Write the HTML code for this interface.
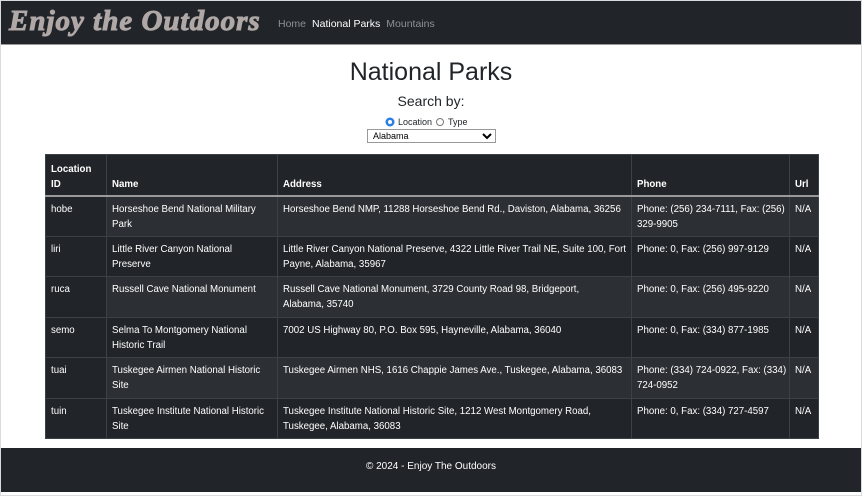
<!DOCTYPE html>
<html><head><style>
*{box-sizing:border-box;margin:0;padding:0}
body{width:862px;height:496px;background:#fff;font-family:"Liberation Sans",sans-serif;color:#212529;position:relative;overflow:hidden;border:1px solid #d8dbe0}
.nav{position:absolute;left:0;top:0;width:860px;height:44px;background:#212529;border-bottom:1px solid #999}
.logo{position:absolute;left:8px;top:4px;font-family:"Liberation Serif",serif;font-weight:bold;font-style:italic;font-size:29px;color:#b0a8a6;letter-spacing:1px;-webkit-text-stroke:1px #b0a8a6}
.links{position:absolute;left:277px;top:17px;font-size:10.5px;color:#8c9196}
.links span{margin-right:6px}
.links .a{color:#fff}
h1{position:absolute;left:0;width:860px;top:57px;text-align:center;font-weight:normal;font-size:25px}
.sb{position:absolute;left:0;width:860px;top:92px;text-align:center;font-size:14px}
.radio{position:absolute;left:385px;top:116px;font-size:9px;display:flex;align-items:center;gap:4px}
.r{width:8px;height:8px;border-radius:50%;border:1px solid #777;display:inline-block}
.r.on{border:2.5px solid #2b7ee8;background:#fff;box-shadow:0 0 0 0.5px #2b7ee8}
select{position:absolute;left:366px;top:128px;width:129px;height:14px;font-size:9px;font-family:"Liberation Sans",sans-serif;border:1px solid #999;background:#fff;padding-left:1px}
table{position:absolute;left:44px;top:153px;width:773px;table-layout:fixed;border-collapse:collapse;font-size:9.7px;color:#fff;background:#212529;border:1px solid #555}
td,th{border:1px solid #3c4146;padding:5px 5px 3px;vertical-align:top;line-height:15px;text-align:left;white-space:nowrap;overflow:hidden}
th{vertical-align:bottom;height:41px;border-bottom:2px solid #999}
tbody tr:nth-child(odd) td{background:#2c3034}
tbody tr td:first-child{background:#212529}
td{height:40.5px}
.foot{position:absolute;left:0;top:447px;width:860px;height:44px;background:#212529;color:#fff;font-size:10px;text-align:center;line-height:37px}
</style></head><body>
<div class="nav"><div class="logo">Enjoy the Outdoors</div>
<div class="links"><span>Home</span><span class="a">National Parks</span><span>Mountains</span></div></div>
<h1>National Parks</h1>
<div class="sb">Search by:</div>
<div class="radio"><span class="r on"></span>Location <span class="r"></span>Type</div>
<select><option>Alabama</option></select>
<table>
<colgroup><col style="width:61px"><col style="width:171px"><col style="width:354px"><col style="width:158px"><col style="width:29px"></colgroup>
<thead><tr><th>Location<br>ID</th><th>Name</th><th>Address</th><th>Phone</th><th>Url</th></tr></thead>
<tbody>
<tr><td>hobe</td><td>Horseshoe Bend National Military<br>Park</td><td>Horseshoe Bend NMP, 11288 Horseshoe Bend Rd., Daviston, Alabama, 36256</td><td>Phone: (256) 234-7111, Fax: (256)<br>329-9905</td><td>N/A</td></tr>
<tr><td>liri</td><td>Little River Canyon National<br>Preserve</td><td>Little River Canyon National Preserve, 4322 Little River Trail NE, Suite 100, Fort<br>Payne, Alabama, 35967</td><td>Phone: 0, Fax: (256) 997-9129</td><td>N/A</td></tr>
<tr><td>ruca</td><td>Russell Cave National Monument</td><td>Russell Cave National Monument, 3729 County Road 98, Bridgeport,<br>Alabama, 35740</td><td>Phone: 0, Fax: (256) 495-9220</td><td>N/A</td></tr>
<tr><td>semo</td><td>Selma To Montgomery National<br>Historic Trail</td><td>7002 US Highway 80, P.O. Box 595, Hayneville, Alabama, 36040</td><td>Phone: 0, Fax: (334) 877-1985</td><td>N/A</td></tr>
<tr><td>tuai</td><td>Tuskegee Airmen National Historic<br>Site</td><td>Tuskegee Airmen NHS, 1616 Chappie James Ave., Tuskegee, Alabama, 36083</td><td>Phone: (334) 724-0922, Fax: (334)<br>724-0952</td><td>N/A</td></tr>
<tr><td>tuin</td><td>Tuskegee Institute National Historic<br>Site</td><td>Tuskegee Institute National Historic Site, 1212 West Montgomery Road,<br>Tuskegee, Alabama, 36083</td><td>Phone: 0, Fax: (334) 727-4597</td><td>N/A</td></tr>
</tbody></table>
<div class="foot">© 2024 - Enjoy The Outdoors</div>
</body></html>
